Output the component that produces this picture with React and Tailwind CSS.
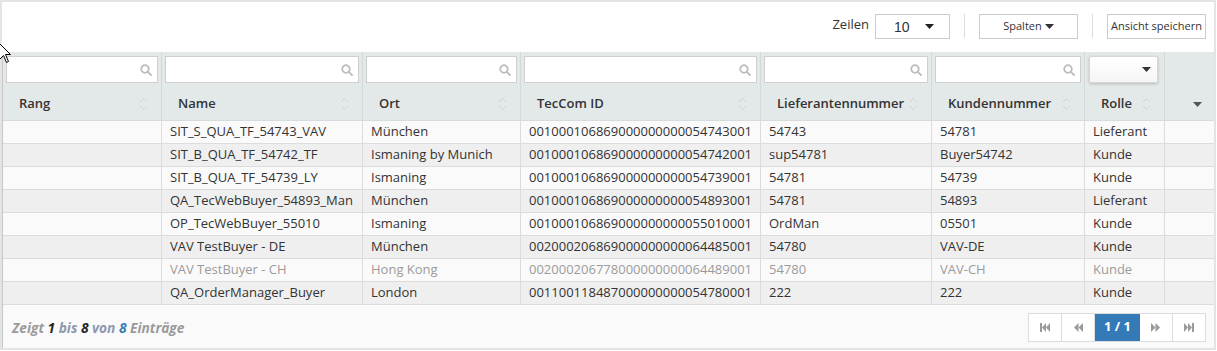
import React from "react";

const cols = "grid grid-cols-[159px_201px_158px_240px_171px_153px_80px_49px]";

const rows = [
  ["SIT_S_QUA_TF_54743_VAV", "München", "001000106869000000000054743001", "54743", "54781", "Lieferant"],
  ["SIT_B_QUA_TF_54742_TF", "Ismaning by Munich", "001000106869000000000054742001", "sup54781", "Buyer54742", "Kunde"],
  ["SIT_B_QUA_TF_54739_LY", "Ismaning", "001000106869000000000054739001", "54781", "54739", "Kunde"],
  ["QA_TecWebBuyer_54893_Man", "München", "001000106869000000000054893001", "54781", "54893", "Lieferant"],
  ["OP_TecWebBuyer_55010", "Ismaning", "001000106869000000000055010001", "OrdMan", "05501", "Kunde"],
  ["VAV TestBuyer - DE", "München", "002000206869000000000064485001", "54780", "VAV-DE", "Kunde"],
  ["VAV TestBuyer - CH", "Hong Kong", "002000206778000000000064489001", "54780", "VAV-CH", "Kunde", true],
  ["QA_OrderManager_Buyer", "London", "001100118487000000000054780001", "222", "222", "Kunde"],
];

const headers = ["Rang", "Name", "Ort", "TecCom ID", "Lieferantennummer", "Kundennummer"];

function SortIcon() {
  return (
    <svg width="9" height="14" viewBox="0 0 9 14" fill="none" stroke="#c3c9c9" strokeWidth="1" strokeDasharray="1 0.6">
      <polyline points="1,5 4.5,1.5 8,5" />
      <polyline points="1,9 4.5,12.5 8,9" />
    </svg>
  );
}

function SearchIcon() {
  return (
    <svg width="12" height="12" viewBox="0 0 12 12" fill="none" stroke="#bdbdbd" strokeWidth="1.8">
      <circle cx="5" cy="5" r="3.8" />
      <line x1="7.8" y1="7.8" x2="11" y2="11" strokeLinecap="round" />
    </svg>
  );
}

function Caret({ color = "#222" }) {
  return (
    <svg width="9" height="5" viewBox="0 0 9 5">
      <polygon points="0,0 9,0 4.5,5" fill={color} />
    </svg>
  );
}

function PageIcon({ kind }) {
  const flip = kind === "next" || kind === "last";
  const edge = kind === "first" || kind === "last";
  return (
    <svg width="10" height="9" viewBox="0 0 10 9" style={{ transform: flip ? "scaleX(-1)" : undefined }}>
      {edge && <rect x="0" y="0" width="2" height="9" fill="#9a9a9a" />}
      <polygon points={edge ? "6,0 2,4.5 6,9" : "5.5,0 1,4.5 5.5,9"} fill="#9a9a9a" />
      <polygon points={edge ? "10,0 6,4.5 10,9" : "10,0 5.5,4.5 10,9"} fill="#9a9a9a" />
    </svg>
  );
}

export default function App() {
  return (
    <div className="relative w-[1217px] h-[351px] bg-white font-['Open_Sans',sans-serif] text-[13px] text-[#333] overflow-hidden">
      <div className="w-[1216px] h-[350px] border-2 border-[#e4e4e4] flex flex-col">
        {/* toolbar */}
        <div className="h-[50px] shrink-0 flex items-center justify-end pr-[8px] pb-[2px]">
          <span className="text-[13px] text-[#333] mr-[6px] -mt-[3px]">Zeilen</span>
          <div className="w-[75px] h-[25px] border border-[#ccc] bg-white flex items-center justify-between pl-[18px] pr-[15px]">
            <span className="text-[14px] text-[#333] mt-[2px] font-['Liberation_Sans',sans-serif]">10</span>
            <Caret />
          </div>
          <div className="w-px h-[24px] bg-[#ddd] mx-[14px]" />
          <div className="w-[99px] h-[25px] border border-[#ccc] bg-white flex items-center justify-center gap-[3px] text-[11px] text-[#333]">
            Spalten <Caret color="#333" />
          </div>
          <div className="w-px h-[24px] bg-[#ddd] mx-[14px]" />
          <div className="w-[99px] h-[25px] border border-[#ccc] bg-white flex items-center justify-center text-[11px] text-[#333]">
            Ansicht speichern
          </div>
        </div>

        {/* table */}
        <div className="flex-1 border-l border-[#c8c8c8] flex flex-col">
          <div className="bg-[#e3e9e9] border-b border-[#d6dcdc]">
            <div className={`${cols} h-[36px]`}>
              {headers.map((h) => (
                <div key={h} className="border-r border-[#d2dada] pl-[3px] pr-[3px] pt-[4px]">
                  <div className="h-[27px] bg-white border border-[#cfcfcf] flex items-center justify-end pr-[5px]">
                    <SearchIcon />
                  </div>
                </div>
              ))}
              <div className="border-r border-[#d2dada] pl-[4px] pr-[6px] pt-[4px]">
                <div className="h-[27px] bg-gradient-to-b from-white to-[#f6f6f6] border border-[#d6d6d6] shadow-[0_1px_3px_rgba(0,0,0,0.2)] rounded-[2px] flex items-center justify-end pr-[6px]">
                  <Caret color="#333" />
                </div>
              </div>
              <div />
            </div>
            <div className={`${cols} h-[32px]`}>
              {headers.map((h) => (
                <div key={h} className="border-r border-[#d2dada] flex items-center justify-between pl-[16px] pr-[13px] font-semibold text-[13px] text-[#333]">
                  <span>{h}</span>
                  <SortIcon />
                </div>
              ))}
              <div className="border-r border-[#d2dada] flex items-center pl-[16px] gap-[10px] font-semibold">
                <span>Rolle</span>
                <SortIcon />
              </div>
              <div className="flex items-center justify-end pr-[12px]">
                <Caret color="#555" />
              </div>
            </div>
          </div>

          {rows.map((r, i) => (
            <div
              key={i}
              className={`${cols} h-[23px] border-b border-[#dcdcdc] ${i % 2 === 0 ? "bg-[#fafafa]" : "bg-[#efefef]"} ${r[6] ? "text-[#9a9a9a]" : "text-[#333]"}`}
            >
              <div className="border-r border-[#dcdcdc]" />
              {r.slice(0, 6).map((c, j) => (
                <div key={j} className="border-r border-[#dcdcdc] pl-[8px] flex items-center whitespace-nowrap overflow-hidden">
                  {c}
                </div>
              ))}
              <div />
            </div>
          ))}

          {/* footer */}
          <div className="flex-1 bg-[#fafafa] flex items-center justify-between pl-[9px] pr-[8px]">
            <span className="italic font-bold text-[13.7px] text-[#9a9a9a] mt-[4px]">
              Zeigt <span className="text-[#222]">1</span> <span className="text-[#8e98ae]">bis</span>{" "}
              <span className="text-[#222]">8</span> <span className="text-[#8e98ae]">von</span>{" "}
              <span className="text-[#337ab7]">8</span> Einträge
            </span>
            <div className="flex h-[29px] border border-[#dddddd] bg-white mt-[1px]">
              <div className="w-[33px] flex items-center justify-center border-r border-[#ddd]"><PageIcon kind="first" /></div>
              <div className="w-[33px] flex items-center justify-center border-r border-[#ddd]"><PageIcon kind="prev" /></div>
              <div className="w-[45px] flex items-center justify-center bg-[#337ab7] text-white font-bold text-[13px]">1 / 1</div>
              <div className="w-[33px] flex items-center justify-center border-r border-[#ddd]"><PageIcon kind="next" /></div>
              <div className="w-[32px] flex items-center justify-center"><PageIcon kind="last" /></div>
            </div>
          </div>
        </div>
      </div>

      {/* mouse cursor */}
      <svg className="absolute left-[-1px] top-[43px]" width="13" height="21" viewBox="0 0 13 21">
        <polygon points="0.5,0.5 0.5,16.5 4.5,12.5 7.5,19.5 9.5,18.5 6.5,11.5 11.5,11.5" fill="white" stroke="black" strokeWidth="1" />
      </svg>
    </div>
  );
}
